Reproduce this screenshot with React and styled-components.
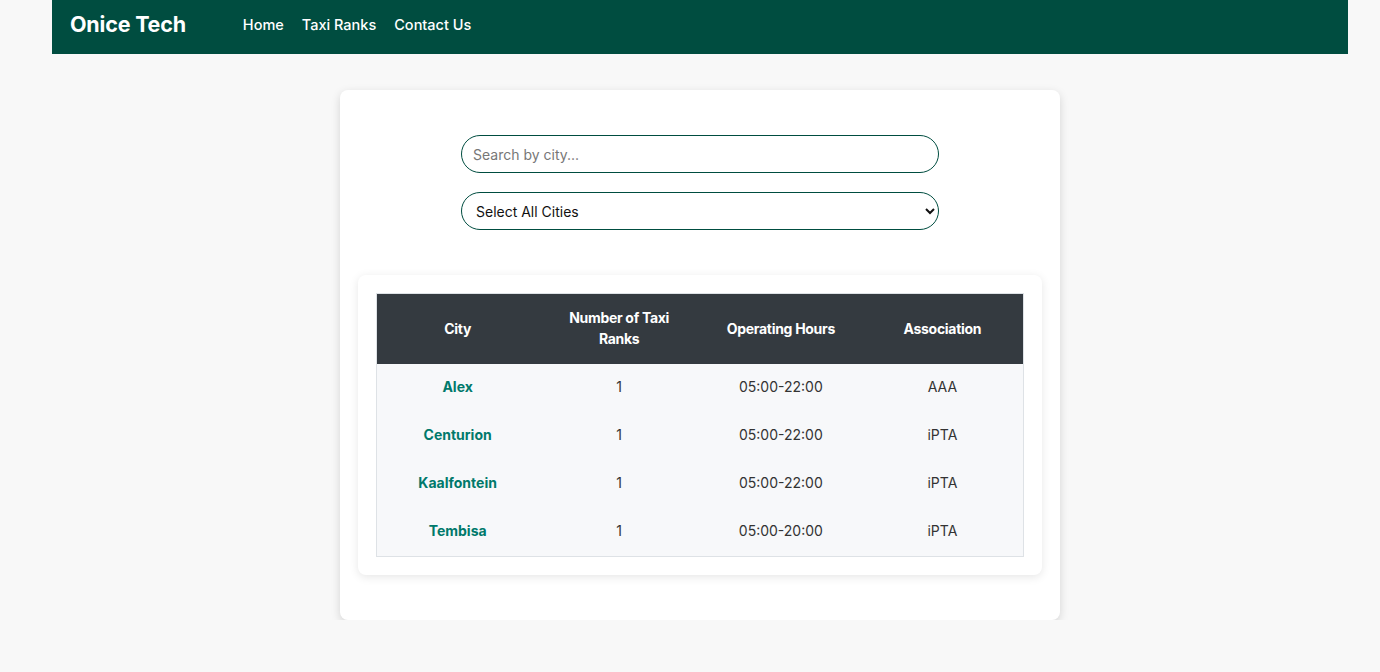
import React, {useState} from 'react';
import styled, {createGlobalStyle} from 'styled-components';

const ranks = [
    {city: 'Alex', count: 1, hours: '05:00-22:00', association: 'AAA'},
    {city: 'Centurion', count: 1, hours: '05:00-22:00', association: 'iPTA'},
    {city: 'Kaalfontein', count: 1, hours: '05:00-22:00', association: 'iPTA'},
    {city: 'Tembisa', count: 1, hours: '05:00-20:00', association: 'iPTA'},
];

function App() {
    const [search, setSearch] = useState('');
    const [selected, setSelected] = useState('');

    const rows = ranks.filter((r) =>
        r.city.toLowerCase().includes(search.toLowerCase()) && (selected === '' || r.city === selected)
    );

  return (
    <Page>
        <GlobalStyle />
        <Navbar>
            <Brand>Onice Tech</Brand>
            <NavLinks>
                <a href="#">Home</a>
                <a href="#">Taxi Ranks</a>
                <a href="#">Contact Us</a>
            </NavLinks>
        </Navbar>
        <Main>
            <Card>
                <Filters>
                    <SearchInput
                        type="text"
                        placeholder="Search by city..."
                        value={search}
                        onChange={(e) => setSearch(e.target.value)}
                    />
                    <CitySelect value={selected} onChange={(e) => setSelected(e.target.value)}>
                        <option value="">Select All Cities</option>
                        {ranks.map((r) => (
                            <option key={r.city} value={r.city}>{r.city}</option>
                        ))}
                    </CitySelect>
                </Filters>
                <TableCard>
                    <Table>
                        <thead>
                            <tr>
                                <th>City</th>
                                <th>Number of Taxi<br />Ranks</th>
                                <th>Operating Hours</th>
                                <th>Association</th>
                            </tr>
                        </thead>
                        <tbody>
                            {rows.map((r) => (
                                <tr key={r.city}>
                                    <td className="city">{r.city}</td>
                                    <td>{r.count}</td>
                                    <td>{r.hours}</td>
                                    <td>{r.association}</td>
                                </tr>
                            ))}
                        </tbody>
                    </Table>
                </TableCard>
            </Card>
        </Main>
    </Page>
  )
}

const GlobalStyle = createGlobalStyle`
body{
    margin: 0;
    background-color: #f8f8f8;
    font-family: Inter, "Noto Sans", sans-serif;
    color: #333;
}
`;

const Page = styled.div`
width: 1296px;
margin-left: 52px;
`;

const Navbar = styled.nav`
display: flex;
align-items: center;
height: 54px;
padding: 0 18px 6px;
box-sizing: border-box;
background-color: #004d40;
`;

const Brand = styled.div`
color: white;
font-size: 21.5px;
font-weight: 700;
letter-spacing: -0.2px;
margin-right: 57px;
`;

const NavLinks = styled.div`
display: flex;
gap: 18px;
a{
    color: white;
    text-decoration: none;
    font-size: 14.5px;
    font-weight: 500;
}
`;

const Main = styled.main`
display: flex;
justify-content: center;
padding-top: 36px;
`;

const Card = styled.div`
width: 720px;
box-sizing: border-box;
padding: 45px 18px;
background-color: white;
border-radius: 8px;
box-shadow: 0 3px 10px rgba(0,0,0,0.15);
`;

const Filters = styled.div`
display: flex;
flex-direction: column;
align-items: center;
gap: 19px;
margin-bottom: 45px;
`;

const SearchInput = styled.input`
width: 478px;
height: 38px;
box-sizing: border-box;
padding: 0 11px;
border: 1px solid #004d40;
border-radius: 20px;
font-family: inherit;
font-size: 14px;
outline: none;
&::placeholder{
    color: #777;
}
`;

const CitySelect = styled.select`
width: 478px;
height: 38px;
box-sizing: border-box;
padding: 0 10px;
border: 1px solid #004d40;
border-radius: 20px;
background-color: white;
font-family: inherit;
font-size: 14px;
color: #111;
outline: none;
`;

const TableCard = styled.div`
padding: 18px;
background-color: white;
border-radius: 8px;
box-shadow: 0 2px 10px rgba(0,0,0,0.1);
`;

const Table = styled.table`
width: 100%;
border-collapse: collapse;
table-layout: fixed;
border: 1px solid #dee2e6;
th{
    background-color: #343a40;
    color: white;
    font-size: 14px;
    font-weight: 700;
    line-height: 21px;
    padding: 13px 8px 15px;
    letter-spacing: -0.3px;
}
td{
    background-color: #f7f8fa;
    text-align: center;
    font-size: 14px;
    line-height: 24px;
    padding: 11px 8px 13px;
    color: #333;
}
td.city{
    color: #00796b;
    font-weight: 700;
}
`;

export default App
